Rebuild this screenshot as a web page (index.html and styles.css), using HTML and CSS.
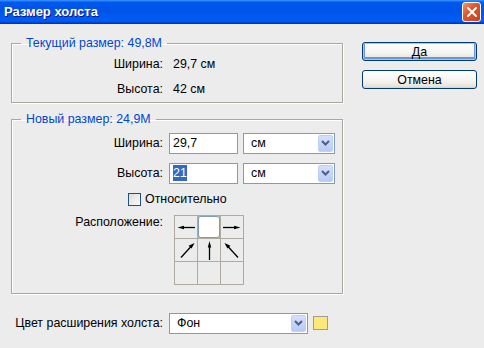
FILE: index.html
```html
<!DOCTYPE html>
<html lang="ru">
<head>
    <meta charset="UTF-8">
    <title>Размер холста</title>
    <link rel="stylesheet" href="styles.css">
</head>
<body>
    <div class="titlebar">
        <span class="title">Размер холста</span>
        <span class="close">
            <svg width="10" height="10" viewBox="0 0 10 10"><path d="M1 1L9 9M9 1L1 9" stroke="#fff" stroke-width="2" stroke-linecap="square"/></svg>
        </span>
    </div>
    <div class="dialog">
        <div class="main">
            <fieldset class="group current">
                <legend>Текущий размер: 49,8M</legend>
                <div class="row info"><span class="label">Ширина:</span><span class="value">29,7 см</span></div>
                <div class="row info"><span class="label">Высота:</span><span class="value">42 см</span></div>
            </fieldset>

            <fieldset class="group new">
                <legend>Новый размер: 24,9M</legend>
                <div class="row field">
                    <span class="label">Ширина:</span>
                    <div class="input"><span>29,7</span></div>
                    <div class="combo"><span>см</span><span class="drop"><svg width="9" height="6" viewBox="0 0 9 6"><path d="M1 1L4.5 4.5L8 1" fill="none" stroke="#4d6185" stroke-width="2"/></svg></span></div>
                </div>
                <div class="row field">
                    <span class="label">Высота:</span>
                    <div class="input"><span class="selected">21</span></div>
                    <div class="combo"><span>см</span><span class="drop"><svg width="9" height="6" viewBox="0 0 9 6"><path d="M1 1L4.5 4.5L8 1" fill="none" stroke="#4d6185" stroke-width="2"/></svg></span></div>
                </div>
                <div class="row check">
                    <span class="checkbox"></span><span>Относительно</span>
                </div>
                <div class="row anchor">
                    <span class="label">Расположение:</span>
                    <div class="anchor-grid">
                        <div class="cell">
                            <svg viewBox="0 0 22 22"><path d="M20 11.5H7" stroke="#000" stroke-width="1.3"/><polygon points="2.5,11.5 9,9.8 9,13.2"/></svg>
                        </div>
                        <div class="cell active"></div>
                        <div class="cell">
                            <svg viewBox="0 0 22 22"><path d="M2 11.5H15" stroke="#000" stroke-width="1.3"/><polygon points="19.5,11.5 13,9.8 13,13.2"/></svg>
                        </div>
                        <div class="cell">
                            <svg viewBox="0 0 22 22"><path d="M6 18.5L16 7.5" stroke="#000" stroke-width="1.3"/><polygon points="19.5,4 16.6,9.6 13.6,6.8"/></svg>
                        </div>
                        <div class="cell">
                            <svg viewBox="0 0 22 22"><path d="M11.5 21V7" stroke="#000" stroke-width="1.3"/><polygon points="11.5,2 9.8,8.5 13.2,8.5"/></svg>
                        </div>
                        <div class="cell">
                            <svg viewBox="0 0 22 22"><path d="M17 18.5L7 7.5" stroke="#000" stroke-width="1.3"/><polygon points="3.5,4 6.4,9.6 9.4,6.8"/></svg>
                        </div>
                        <div class="cell"></div>
                        <div class="cell"></div>
                        <div class="cell"></div>
                    </div>
                </div>
            </fieldset>

            <div class="row extension">
                <span class="label">Цвет расширения холста:</span>
                <div class="combo wide"><span>Фон</span><span class="drop"><svg width="9" height="6" viewBox="0 0 9 6"><path d="M1 1L4.5 4.5L8 1" fill="none" stroke="#4d6185" stroke-width="2"/></svg></span></div>
                <span class="swatch"></span>
            </div>
        </div>

        <div class="buttons">
            <button class="btn default">Да</button>
            <button class="btn">Отмена</button>
        </div>
    </div>
</body>
</html>
```

FILE: styles.css
```css
body {
    margin: 0;
    width: 484px;
    height: 348px;
    overflow: hidden;
    background-color: #ececec;
    font-family: "Liberation Sans", Arial, sans-serif;
    font-size: 12.4px;
    color: #000;
}
.titlebar {
    height: 24px;
    box-sizing: border-box;
    display: flex;
    align-items: center;
    justify-content: space-between;
    padding: 0 3px 1px 4px;
    background: linear-gradient(to bottom, #3d95ff 0%, #0058ee 10%, #0054e6 45%, #005df7 85%, #0050e6 92%, #0035c0 96%, #0033b8 100%);
}
.title {
    color: #fff;
    font-weight: bold;
    font-size: 13px;
    text-shadow: 1px 1px #0a1883;
}
.close {
    width: 17px;
    height: 18px;
    display: flex;
    align-items: center;
    justify-content: center;
    border: 1px solid #fff;
    border-radius: 3px;
    background: linear-gradient(135deg, #f0946e 0%, #e0572f 40%, #c8401a 100%);
}
.dialog {
    display: flex;
}
.main {
    width: 332px;
    padding-left: 11px;
}

/* group boxes */
.group {
    margin: 12px 0 0;
    padding: 0;
    border: 1px solid #a9a89c;
    box-shadow: 1px 1px 0 #fff, inset 1px 1px 0 #fff;
}
.group legend {
    margin-left: 9px;
    padding: 0 5px;
    line-height: 15px;
    color: #0046d5;
}
.group.new {
    margin-top: 9px;
}
.row {
    display: flex;
    align-items: center;
}
.label {
    width: 151px;
    text-align: right;
    flex-shrink: 0;
}
.info {
    height: 25px;
}
.info .value {
    margin-left: 10px;
}
.current {
    padding-bottom: 1px;
}

/* fields */
.field {
    height: 30px;
}
.new {
    padding-top: 1px;
    padding-bottom: 8px;
}
.input {
    margin-left: 6px;
    width: 69px;
    height: 21px;
    box-sizing: border-box;
    border: 1px solid #7f9db9;
    background: #fff;
    padding-left: 3px;
    display: flex;
    align-items: center;
}
.selected {
    background: #316ac5;
    color: #fff;
    padding: 1px 0;
}
.combo {
    margin-left: 5px;
    width: 92px;
    height: 21px;
    box-sizing: border-box;
    border: 1px solid #7f9db9;
    background: #fff;
    padding: 1px 1px 1px 7px;
    display: flex;
    align-items: center;
    justify-content: space-between;
}
.drop {
    width: 15px;
    height: 17px;
    box-sizing: border-box;
    border: 1px solid #c0cff5;
    border-radius: 2px;
    background: linear-gradient(to bottom, #d5e0fb, #b7cbf6);
    display: flex;
    align-items: center;
    justify-content: center;
}

.check {
    height: 22px;
    padding-left: 116px;
}
.checkbox {
    width: 11px;
    height: 11px;
    border: 1px solid #1c5180;
    background: linear-gradient(135deg, #dcdcd7, #fbfbf9);
    margin-right: 4px;
}

.anchor {
    align-items: flex-start;
    margin-top: 5px;
}
.anchor .label {
    line-height: 15px;
}
.anchor-grid {
    margin-left: 11px;
    display: grid;
    grid-template-columns: repeat(3, 22px);
    grid-template-rows: repeat(3, 22px);
    gap: 1px;
    padding: 1px;
    background: #aeab9e;
}
.cell {
    background: #ececec;
}
.cell svg {
    display: block;
    width: 22px;
    height: 22px;
}
.cell.active {
    background: #fff;
    box-shadow: inset 0 0 0 1px #7f9db9;
    border-radius: 3px;
}

/* bottom row */
.extension {
    margin-top: 18px;
    height: 22px;
}
.extension .label {
    width: 152px;
}
.combo.wide {
    margin-left: 6px;
    width: 139px;
}
.swatch {
    width: 13px;
    height: 12px;
    margin-left: 5px;
    border: 1px solid #9c9c9c;
    background: #fbe878;
}

/* buttons */
.buttons {
    margin-left: 19px;
    padding-top: 18px;
    display: flex;
    flex-direction: column;
    gap: 9px;
}
.btn {
    width: 115px;
    height: 19px;
    padding: 0;
    font-family: inherit;
    font-size: 12.4px;
    color: #000;
    border: 1px solid #003c74;
    border-radius: 3px;
    background: linear-gradient(to bottom, #ffffff 0%, #f4f3ee 60%, #e6e3da 90%, #d6d0c5 100%);
}
.btn.default {
    box-shadow: inset 0 0 0 1px #a8c4f5, inset 0 -1px 0 2px #6f93db;
}
```
